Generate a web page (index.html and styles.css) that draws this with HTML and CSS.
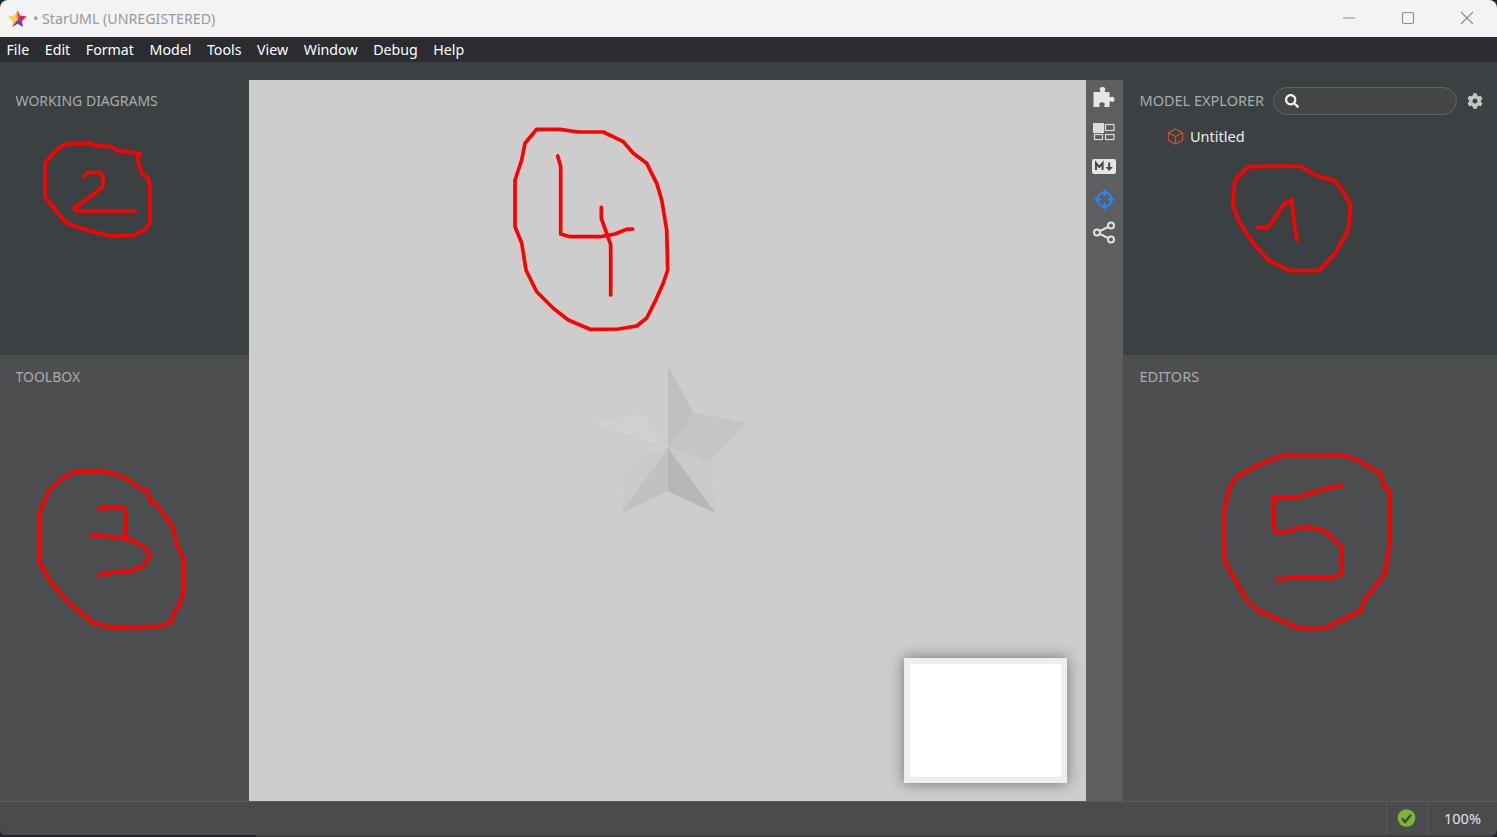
FILE: index.html
```html
<!DOCTYPE html>
<html lang="en">
<head>
<meta charset="utf-8">
<title>StarUML</title>
<link rel="stylesheet" href="styles.css">
</head>
<body>
<div class="app">
  <header class="titlebar">
    <svg class="logo" viewBox="0 0 20 20">
      <polygon points="10,1 10,11 12.6,6.8" fill="#d6264f"/>
      <polygon points="12.6,6.8 19.6,8 14.6,12.8 10,11" fill="#d0295a"/>
      <polygon points="10,11 14.6,12.8 15.8,19 10,15.6" fill="#6a3bb5"/>
      <polygon points="10,11 10,15.6 4.2,19" fill="#4a3aa8"/>
      <polygon points="10,11 4.2,19 5.4,12.8" fill="#fbb92d"/>
      <polygon points="10,11 5.4,12.8 0.4,8 7.4,6.8" fill="#fdd034"/>
      <polygon points="10,1 10,11 7.4,6.8" fill="#f9a825"/>
    </svg>
    <span class="title">• StarUML (UNREGISTERED)</span>
    <div class="winctl">
      <svg viewBox="0 0 14 14"><path d="M1 7h12"/></svg>
      <svg viewBox="0 0 14 14"><rect x="1.5" y="1.5" width="11" height="11" rx="1.5"/></svg>
      <svg viewBox="0 0 14 14"><path d="M1 1l12 12M13 1L1 13"/></svg>
    </div>
  </header>
  <nav class="menubar">
    <span>File</span><span>Edit</span><span>Format</span><span>Model</span><span>Tools</span><span>View</span><span>Window</span><span>Debug</span><span>Help</span>
  </nav>
  <main class="workspace">
    <aside class="side side-left">
      <section class="panel panel-top"><h2 class="panel-title">WORKING DIAGRAMS</h2></section>
      <section class="panel panel-bottom"><h2 class="panel-title">TOOLBOX</h2></section>
    </aside>
    <div class="center">
      <div class="canvas">
        <svg class="watermark" viewBox="0 0 156 148">
          <polygon points="76,0 76,82 101.6,46.6" fill="#bfbfbf"/>
          <polygon points="101.6,46.6 154,56.6 118.3,95 76,82" fill="#c5c5c5"/>
          <polygon points="76,82 118.3,95 124,147.6" fill="#cacaca"/>
          <polygon points="76,82 124,147.6 76,125.6" fill="#b7b7b7"/>
          <polygon points="76,82 76,125.6 28.3,147.6" fill="#c1c1c1"/>
          <polygon points="76,82 28.3,147.6 34.3,95" fill="#cacaca"/>
          <polygon points="76,82 0,57.3 50,46.6" fill="#d0d0d0"/>
        </svg>
        <div class="minimap"><div class="minimap-page"></div></div>
      </div>
      <div class="toolstrip">
        <button class="tool"><svg class="i-puzzle" viewBox="0 0 22 22"><path d="M0.5 6H6.5C7.5 6 7.5 5 7 4.2C6 2.5 7.5 1 9.5 1C11.5 1 13 2.5 12 4.2C11.5 5 11.5 6 12.5 6H16.5V10.5C16.5 11.5 17.5 11.5 18.2 11C20 10 21.5 11.3 21.5 13.3C21.5 15.3 20 16.6 18.2 15.6C17.5 15.1 16.5 15.1 16.5 16.1V21H12C11 21 11 20 11.5 19.3C12.5 17.6 11 16.3 9 16.3C7 16.3 5.5 17.6 6.5 19.3C7 20 7 21 6 21H0.5Z"/></svg></button>
        <button class="tool tool-low"><svg class="i-layout" viewBox="0 0 22 18"><rect x="0.5" y="0.5" width="10" height="9" class="solid"/><rect x="12.5" y="1.5" width="8.5" height="6"/><rect x="1.5" y="11.5" width="8" height="5"/><rect x="12.5" y="11.5" width="8.5" height="5"/></svg></button>
        <button class="tool tool-low"><svg class="i-md" viewBox="0 0 24 15"><rect x="0" y="0" width="24" height="15" rx="2" class="plate"/><path class="mark" d="M4 11V4l3.3 4L10.6 4v7"/><path class="mark" d="M17.2 3.5v6"/><path class="arrow" d="M13.5 8h7.4l-3.7 4z"/></svg></button>
        <button class="tool"><svg class="i-target" viewBox="0 0 24 24"><circle cx="12" cy="12" r="7.5"/><path d="M12 1.5v7M12 15.5v7M1.5 12h7M15.5 12h7"/></svg></button>
        <button class="tool tool-high"><svg class="i-share" viewBox="0 0 24 24"><circle cx="19" cy="5.5" r="3"/><circle cx="5" cy="12.5" r="3"/><circle cx="19" cy="19.5" r="3"/><path d="M8 11l8-4M8 14l8 4"/></svg></button>
      </div>
    </div>
    <aside class="side side-right">
      <section class="panel panel-top">
        <div class="explorer-head">
          <h2 class="panel-title">MODEL EXPLORER</h2>
          <label class="search">
            <svg viewBox="0 0 512 512"><path d="M505 442.7L405.3 343c-4.5-4.5-10.6-7-17-7H372c27.6-35.3 44-79.7 44-128C416 93.1 322.9 0 208 0S0 93.1 0 208s93.1 208 208 208c48.3 0 92.7-16.4 128-44v16.3c0 6.4 2.5 12.5 7 17l99.7 99.7c9.4 9.4 24.6 9.4 33.9 0l28.3-28.3c9.4-9.4 9.4-24.6.1-34zM208 336c-70.7 0-128-57.2-128-128 0-70.7 57.2-128 128-128 70.7 0 128 57.2 128 128 0 70.7-57.2 128-128 128z"/></svg>
          </label>
          <svg class="gear" viewBox="0 0 512 512"><path d="M487.4 315.7l-42.6-24.6c4.3-23.2 4.3-47 0-70.2l42.6-24.6c4.9-2.8 7.1-8.6 5.5-14-11.1-35.6-30-67.8-54.7-94.6-3.8-4.1-10-5.1-14.8-2.3L380.8 110c-17.9-15.4-38.5-27.3-60.8-35.1V25.8c0-5.6-3.9-10.5-9.4-11.7-36.7-8.2-74.3-7.8-109.2 0-5.5 1.2-9.4 6.1-9.4 11.7V75c-22.2 7.9-42.8 19.8-60.8 35.1L88.7 85.5c-4.9-2.8-11-1.9-14.8 2.3-24.7 26.7-43.6 58.9-54.7 94.6-1.7 5.4.6 11.2 5.5 14L67.3 221c-4.3 23.2-4.3 47 0 70.2l-42.6 24.6c-4.9 2.8-7.1 8.6-5.5 14 11.1 35.6 30 67.8 54.7 94.6 3.8 4.1 10 5.1 14.8 2.3l42.6-24.6c17.9 15.4 38.5 27.3 60.8 35.1v49.2c0 5.6 3.9 10.5 9.4 11.7 36.7 8.2 74.3 7.8 109.2 0 5.5-1.2 9.4-6.1 9.4-11.7v-49.2c22.2-7.9 42.8-19.8 60.8-35.1l42.6 24.6c4.9 2.8 11 1.9 14.8-2.3 24.7-26.7 43.6-58.9 54.7-94.6 1.5-5.5-.7-11.3-5.6-14.1zM256 336c-44.1 0-80-35.9-80-80s35.9-80 80-80 80 35.9 80 80-35.9 80-80 80z"/></svg>
        </div>
        <div class="tree-row">
          <svg viewBox="0 0 18 18"><path d="M9 1l7.5 4v8L9 17l-7.5-4V5zM1.5 5L9 9l7.5-4M9 9v8"/></svg>
          <span>Untitled</span>
        </div>
      </section>
      <section class="panel panel-bottom"><h2 class="panel-title">EDITORS</h2></section>
    </aside>
  </main>
  <footer class="statusbar">
    <div class="status-cell status-check">
      <svg viewBox="0 0 20 20"><circle cx="10" cy="10" r="9.3" fill="#7ab92f"/><path d="M5.2 10.4l3.4 3.6 6.2-7.4" fill="none" stroke="#45474a" stroke-width="2.6"/></svg>
    </div>
    <div class="status-cell status-zoom">100%</div>
  </footer>
  <div class="bottom-edge"><div class="bottom-edge-left"></div></div>
</div>
<svg class="ink" viewBox="0 0 1497 837">
  <polygon points="536.7,129.3 560,129.3 578.3,132 603.3,132 623.3,141.7 633.3,153.3 646.7,163.3 656.7,183.3 661.7,200 666.7,230 667.7,270 663.3,283 655,301.7 646.7,318 636.7,326 618.3,329 590,329.3 568.3,320 553.3,308.3 536.7,291.7 526,270 521.7,243 515,226.7 515,180 521.7,160 525,143.3"/>
  <polyline points="557.7,156 560.7,166.7 560.7,234 570,236.7 600,236.7 615,234 626.7,229.3 632.7,229"/>
  <polyline points="601.3,207.3 601.3,218.3 606.7,233.3 610.7,245 610.7,295"/>
  <polygon points="70,143.3 91,143.3 93.3,145 111.7,146.7 118.3,151 140,153.3 137.3,158.3 141.7,173.3 148.3,178.3 150,188.3 150,221.7 146.7,228.3 135,235 110,236 86.7,230 66.7,223.3 56.7,211.7 45,196.7 45,163.3 53.3,153.3 60,146.7"/>
  <polyline points="84,176.7 86.7,172.7 100,172.7 103.3,176.7 102.7,186.7 90,196.7 74,208.3 76.7,211 135,211"/>
  <polygon points="75,471.7 105,471.7 123.3,476.7 140,488.3 146.7,490 150,500 158.3,506.7 171.7,525 176.7,543.3 183.3,558.3 183.3,593.3 178.3,606.7 173.3,613.3 171.7,621.7 158.3,626.7 110,627.3 93.3,622.7 73.3,606.7 60,593.3 51.7,583.3 40,563.3 39.3,513.3 48.3,491.7 60,480"/>
  <polyline points="99,509.3 101.7,507.7 123.3,507.7 126,511.7 126,536.7"/>
  <polyline points="90.7,535 120,537.3 133.3,541 145,547.3 150.7,555 143.3,566 130,571 110,572.7 99,575"/>
  <polygon points="1248.3,166.7 1300,166 1315,175 1335,181 1343.3,191.7 1350.7,205 1348.3,230 1335,253.3 1319,270.7 1290,270.7 1268.3,260 1253.3,243.3 1240,223.3 1232.7,205 1235,180"/>
  <polyline points="1257.7,227.3 1268.3,227.3 1283.3,205 1291.7,199.3 1294,221.7 1297,240"/>
  <polygon points="1285,455 1343.3,455 1355,459 1375,470 1381.7,475 1383.3,485 1390,491.7 1390,541.7 1385,573.3 1363.3,601.7 1361.7,610 1341.7,620 1325,628.3 1298.3,628.3 1276.7,618.3 1258.3,610.7 1246.7,600 1228.3,568.3 1224.3,558.3 1224.3,508.3 1230,486.7 1236.7,476.7 1258.3,465 1276.7,457.7"/>
  <polyline points="1341.7,485.7 1328.3,487.7 1311.7,493.3 1296.7,497.3 1273.3,497.3 1273.3,525 1275.7,532.3 1286.7,532.3 1296.7,528.3 1308.3,527.3 1325,531 1341.7,546.7 1342.3,574.3 1330,577.7 1288.3,577.7 1277.3,579.7"/>
</svg>
</body>
</html>
```
FILE: styles.css
```css
* { box-sizing: border-box; }
html, body { margin: 0; height: 100%; overflow: hidden; background: #24262a; }
body { font-family: "Noto Sans", sans-serif; position: relative; }
.app { height: 837px; display: flex; flex-direction: column; border-radius: 8px; overflow: hidden; }
.titlebar { height: 37px; background: #f3f3f3; display: flex; align-items: center; padding: 0 0 1px 8px; flex: none; }
.logo { width: 19px; height: 19px; margin-right: 6px; }
.title { color: #999; font-size: 14.2px; }
.winctl { margin-left: auto; display: flex; gap: 45px; padding-right: 23px; }
.winctl svg { width: 14px; height: 14px; fill: none; stroke: #8c8c8c; stroke-width: 1.1; }
.menubar { height: 25px; background: #2a2c2f; color: #fff; font-size: 14.2px; display: flex; align-items: center; padding-left: 6.5px; gap: 15.6px; flex: none; }
.workspace { flex: 1; display: flex; min-height: 0; }
.side { display: flex; flex-direction: column; flex: none; }
.side-left { width: 249px; }
.side-right { width: 374px; }
.panel { padding: 0 15.5px; }
.side-right .panel { padding: 0 16.5px; }
.panel-top { height: 293px; background: #3b4043; }
.panel-bottom { flex: 1; background: #4d4e50; }
.panel-title { margin: 0; font-size: 14px; font-weight: 400; color: #a9abac; line-height: 20px; padding-top: 29px; }
.side-right .panel-title { font-size: 14.5px; }
.panel-bottom .panel-title { padding-top: 12px; }
.side-right .panel-bottom .panel-title { padding-top: 11px; }
.center { flex: 1; display: flex; padding-top: 18px; background: #3b4043; min-width: 0; }
.canvas { flex: 1; background: #cdcdcd; position: relative; }
.watermark { position: absolute; left: 343px; top: 286px; width: 156px; height: 148px; }
.minimap { position: absolute; right: 19px; bottom: 18px; width: 163px; height: 125px; padding: 6px; background: #eee; box-shadow: 0 0 14px rgba(0,0,0,.45); }
.minimap-page { height: 100%; background: #fff; }
.toolstrip { width: 37px; background: #5d5e60; display: flex; flex-direction: column; flex: none; }
.tool { height: 34px; border: 0; padding: 0 1px 0 0; background: none; display: flex; align-items: center; justify-content: center; }
.tool-low { padding-top: 2px; }
.tool-high { padding-bottom: 2px; }
.i-puzzle { width: 22px; height: 22px; fill: #e6e6e6; }
.i-layout { width: 22px; height: 18px; fill: none; stroke: #dcdcdc; stroke-width: 1.2; }
.i-layout .solid { fill: #dcdcdc; }
.i-md { width: 24px; height: 15px; }
.i-md .plate { fill: #e6e6e6; }
.i-md .mark { fill: none; stroke: #45474a; stroke-width: 2; }
.i-md .arrow { fill: #45474a; }
.i-target { width: 23px; height: 23px; fill: none; stroke: #2a86ff; stroke-width: 2; }
.i-share { width: 24px; height: 24px; fill: none; stroke: #e2e2e2; stroke-width: 2; }
.explorer-head { display: flex; align-items: center; height: 28px; margin: 25px -8px 0 0; }
.explorer-head .panel-title { padding: 0 0 2px; white-space: nowrap; flex: none; }
.search { flex: none; width: 184px; height: 28px; margin-left: 9px; border: 1px solid #5f6366; border-radius: 14px; background: #444546; display: flex; align-items: center; padding-left: 11px; }
.search svg { width: 14px; height: 14px; fill: #f0f0f0; }
.gear { flex: none; width: 16px; height: 16px; margin-left: 10px; fill: #c4c4c4; }
.tree-row { display: flex; align-items: center; height: 28px; margin-top: 7px; padding-left: 27.5px; color: #eee; font-size: 14.5px; gap: 6px; }
.tree-row svg { width: 17px; height: 17px; fill: none; stroke: #c4523c; stroke-width: 1.3; }
.statusbar { height: 34px; flex: none; background: #4a4b4d; border-top: 1px solid #5a5b5d; display: flex; justify-content: flex-end; }
.status-cell { height: 100%; display: flex; align-items: center; justify-content: center; border-left: 1px solid #58595b; padding-bottom: 2px; }
.status-check { width: 41px; padding-right: 2px; }
.status-check svg { width: 19px; height: 20px; }
.status-zoom { width: 70px; color: #e4e4e4; font-size: 14.5px; }
.bottom-edge { height: 2px; flex: none; background: #3e3f41; }
.bottom-edge-left { width: 256px; height: 100%; background: #232528; }
.ink { position: absolute; left: 0; top: 0; width: 1497px; height: 837px; pointer-events: none; fill: none; stroke: #ff0000; stroke-width: 3.7; stroke-linejoin: round; stroke-linecap: round; }
```
